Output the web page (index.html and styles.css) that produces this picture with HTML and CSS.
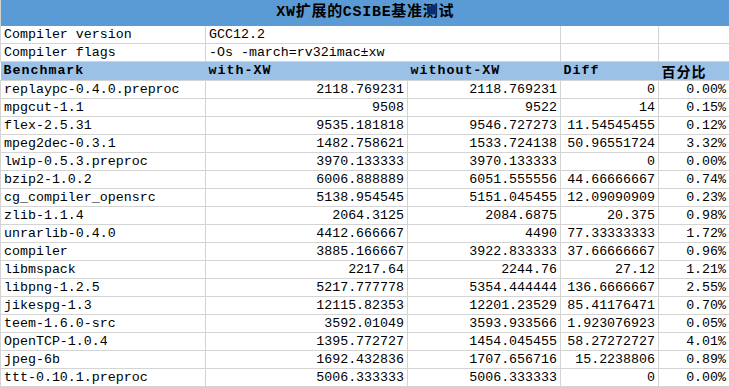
FILE: index.html
```html
<!DOCTYPE html>
<html lang="zh">
<head>
<meta charset="utf-8">
<title>XW扩展的CSIBE基准测试</title>
<link rel="stylesheet" href="styles.css">
</head>
<body>
<table class="sheet">
  <colgroup>
    <col class="col-a"><col class="col-b"><col class="col-c"><col class="col-d"><col class="col-e">
  </colgroup>
  <tr class="title-row"><td colspan="5">XW扩展的CSIBE基准测试</td></tr>
  <tr class="info-row"><td>Compiler version</td><td colspan="2">GCC12.2</td><td></td><td></td></tr>
  <tr class="info-row"><td>Compiler flags</td><td colspan="2">-Os -march=rv32imac±xw</td><td></td><td></td></tr>
  <tr class="head-row"><td>Benchmark</td><td>with-XW</td><td>without-XW</td><td>Diff</td><td class="cjk">百分比</td></tr>
  <tr><td>replaypc-0.4.0.preproc</td><td class="num">2118.769231</td><td class="num">2118.769231</td><td class="num">0</td><td class="num">0.00%</td></tr>
  <tr><td>mpgcut-1.1</td><td class="num">9508</td><td class="num">9522</td><td class="num">14</td><td class="num">0.15%</td></tr>
  <tr><td>flex-2.5.31</td><td class="num">9535.181818</td><td class="num">9546.727273</td><td class="num">11.54545455</td><td class="num">0.12%</td></tr>
  <tr><td>mpeg2dec-0.3.1</td><td class="num">1482.758621</td><td class="num">1533.724138</td><td class="num">50.96551724</td><td class="num">3.32%</td></tr>
  <tr><td>lwip-0.5.3.preproc</td><td class="num">3970.133333</td><td class="num">3970.133333</td><td class="num">0</td><td class="num">0.00%</td></tr>
  <tr><td>bzip2-1.0.2</td><td class="num">6006.888889</td><td class="num">6051.555556</td><td class="num">44.66666667</td><td class="num">0.74%</td></tr>
  <tr><td>cg_compiler_opensrc</td><td class="num">5138.954545</td><td class="num">5151.045455</td><td class="num">12.09090909</td><td class="num">0.23%</td></tr>
  <tr><td>zlib-1.1.4</td><td class="num">2064.3125</td><td class="num">2084.6875</td><td class="num">20.375</td><td class="num">0.98%</td></tr>
  <tr><td>unrarlib-0.4.0</td><td class="num">4412.666667</td><td class="num">4490</td><td class="num">77.33333333</td><td class="num">1.72%</td></tr>
  <tr><td>compiler</td><td class="num">3885.166667</td><td class="num">3922.833333</td><td class="num">37.66666667</td><td class="num">0.96%</td></tr>
  <tr><td>libmspack</td><td class="num">2217.64</td><td class="num">2244.76</td><td class="num">27.12</td><td class="num">1.21%</td></tr>
  <tr><td>libpng-1.2.5</td><td class="num">5217.777778</td><td class="num">5354.444444</td><td class="num">136.6666667</td><td class="num">2.55%</td></tr>
  <tr><td>jikespg-1.3</td><td class="num">12115.82353</td><td class="num">12201.23529</td><td class="num">85.41176471</td><td class="num">0.70%</td></tr>
  <tr><td>teem-1.6.0-src</td><td class="num">3592.01049</td><td class="num">3593.933566</td><td class="num">1.923076923</td><td class="num">0.05%</td></tr>
  <tr><td>OpenTCP-1.0.4</td><td class="num">1395.772727</td><td class="num">1454.045455</td><td class="num">58.27272727</td><td class="num">4.01%</td></tr>
  <tr><td>jpeg-6b</td><td class="num">1692.432836</td><td class="num">1707.656716</td><td class="num">15.2238806</td><td class="num">0.89%</td></tr>
  <tr><td>ttt-0.10.1.preproc</td><td class="num">5006.333333</td><td class="num">5006.333333</td><td class="num">0</td><td class="num">0.00%</td></tr>
  <tr><td></td><td></td><td></td><td></td><td></td></tr>
</table>
</body>
</html>
```

FILE: styles.css
```css
html, body {
  margin: 0;
  padding: 0;
  background: #ffffff;
  overflow: hidden;
}

.sheet {
  border-collapse: collapse;
  table-layout: fixed;
  width: 729px;
  font-family: "Liberation Mono", "Noto Sans CJK SC", monospace;
  font-size: 13.3px;
  color: #000000;
}

.col-a { width: 205px; }
.col-b { width: 202px; }
.col-c { width: 153px; }
.col-d { width: 98px; }
.col-e { width: 71px; }

.sheet td {
  height: 17px;
  padding: 0 3px 0 3px;
  border-right: 1px solid #d4d4d4;
  border-bottom: 1px solid #d4d4d4;
  white-space: nowrap;
  overflow: hidden;
  line-height: 16px;
  vertical-align: middle;
}

.sheet td:first-child {
  border-left: 1px solid #d4d4d4;
}

.sheet .num {
  text-align: right;
}

.title-row td {
  height: 26px;
  padding: 0;
  background: #5b9bd5;
  border: none;
  text-align: center;
  font-family: "Liberation Mono", "Noto Sans CJK SC", monospace;
  font-weight: bold;
  font-size: 15px;
  letter-spacing: 0.7px;
}

.info-row td {
  height: 17px;
}

.head-row td {
  height: 18px;
  background: #9bc2e6;
  border-right: none;
  border-left: none;
  font-weight: bold;
  letter-spacing: 1px;
}

.head-row td:first-child {
  border-left: none;
}

.head-row .cjk {
  font-family: "Noto Sans CJK SC", sans-serif;
  font-size: 14px;
  letter-spacing: 1px;
}
```
